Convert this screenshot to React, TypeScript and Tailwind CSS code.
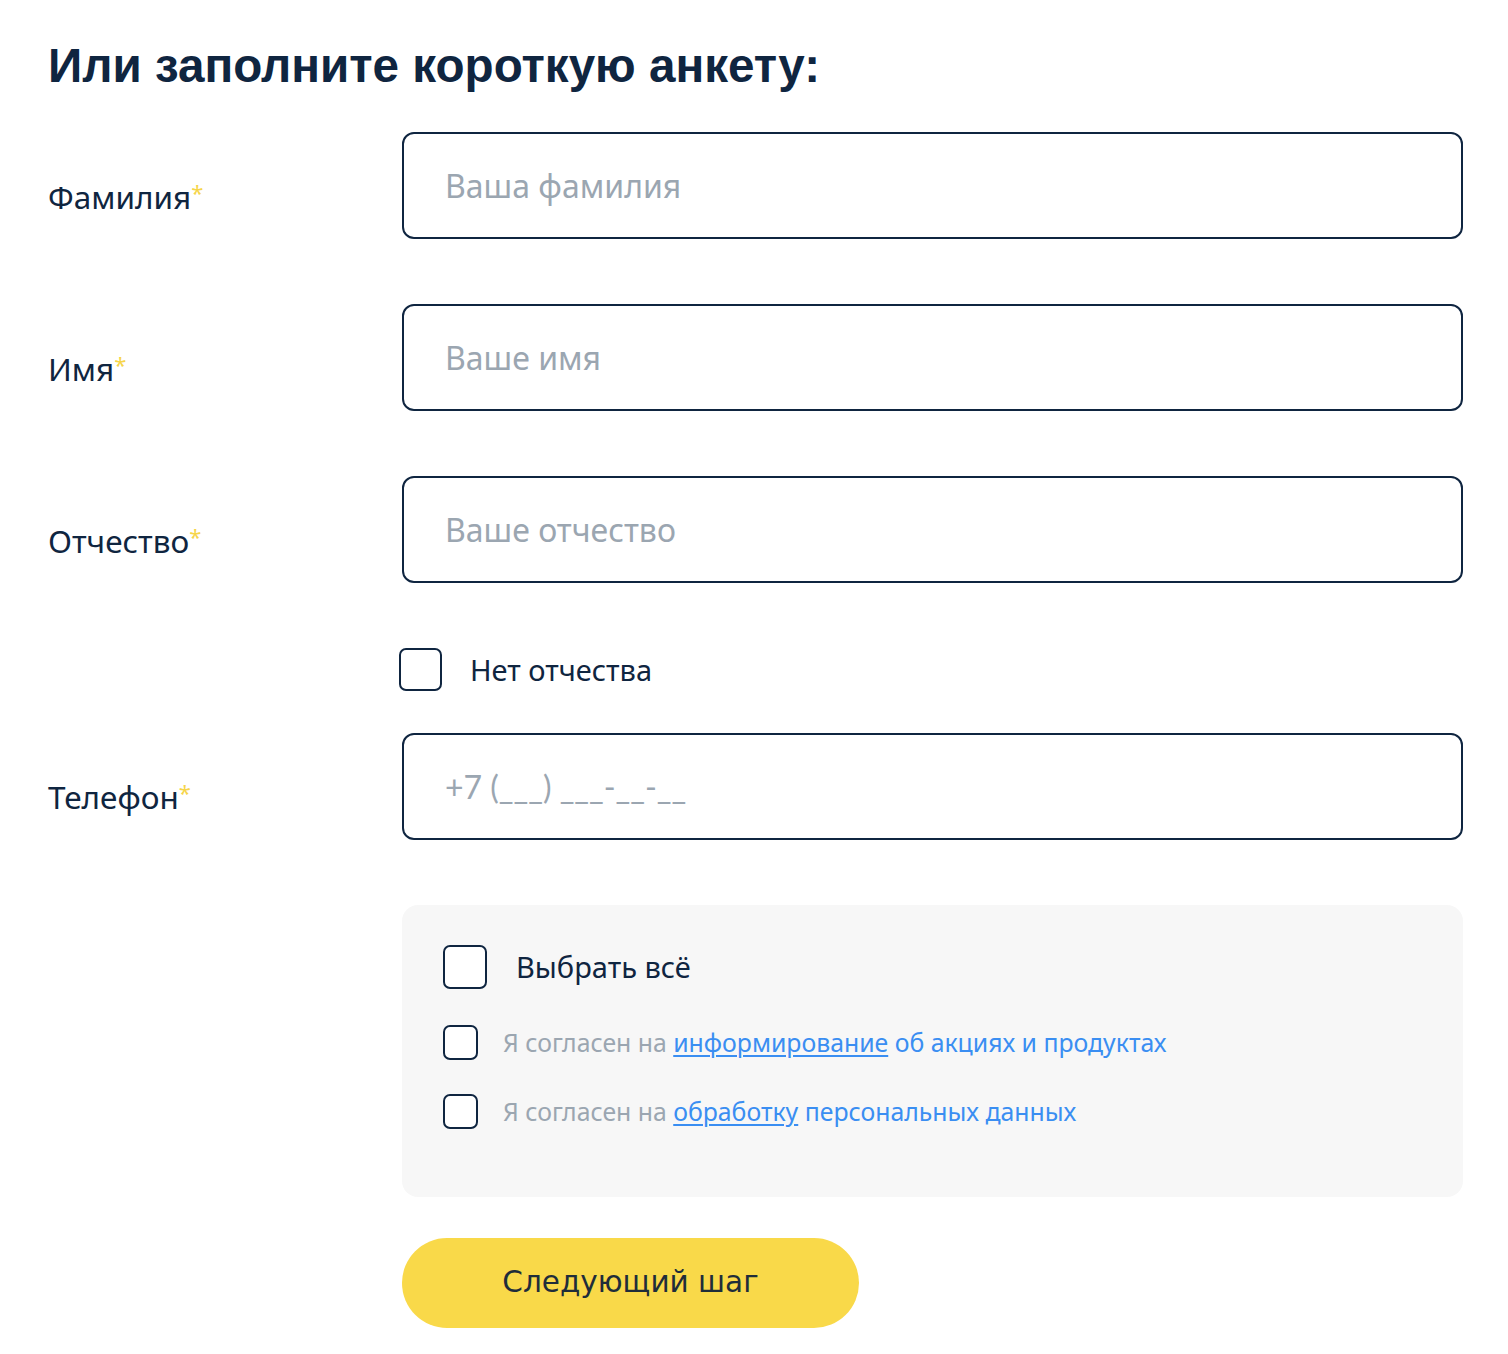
import React from 'react';

const fields = [
  { label: 'Фамилия', placeholder: 'Ваша фамилия' },
  { label: 'Имя', placeholder: 'Ваше имя' },
  { label: 'Отчество', placeholder: 'Ваше отчество' },
];

const Label: React.FC<{ text: string }> = ({ text }) => (
  <div className="w-[354px] shrink-0 pt-[22px] text-[31.5px] text-[#0f2540]">
    {text}
    <span className="relative -top-[8px] text-[22px] text-[#f6d54a]">*</span>
  </div>
);

const Box: React.FC<{ size: string }> = ({ size }) => (
  <span className={`${size} shrink-0 rounded-[7px] border-2 border-[#0f2540] bg-white`} />
);

export default function App() {
  return (
    <div className="min-h-screen bg-white pl-[48px] pr-[45px] pt-[38px] font-['Noto_Sans',sans-serif]">
      <h1 className="font-['Liberation_Sans',Arial,sans-serif] text-[47.6px] font-bold leading-[56px] text-[#0f2540]">
        Или заполните короткую анкету:
      </h1>

      <div className="mt-[38px] flex flex-col gap-[65px]">
        {fields.map((f) => (
          <div key={f.label} className="flex items-center">
            <Label text={f.label} />
            <input
              placeholder={f.placeholder}
              className="h-[107px] flex-1 rounded-[12px] border-2 border-[#0f2540] px-[41px] text-[32px] text-[#0f2540] outline-none placeholder:text-[#9ba6b1]"
            />
          </div>
        ))}
      </div>

      <label className="ml-[351px] mt-[65px] flex items-center gap-[28px]">
        <Box size="h-[43px] w-[43px]" />
        <span className="text-[29px] text-[#0f2540]">Нет отчества</span>
      </label>

      <div className="mt-[41px] flex items-center">
        <Label text="Телефон" />
        <input
          placeholder="+7 (___) ___-__-__"
          className="h-[107px] flex-1 rounded-[12px] border-2 border-[#0f2540] px-[41px] font-['Lato',sans-serif] text-[32px] text-[#0f2540] outline-none placeholder:text-[#9ba6b1]"
        />
      </div>

      <div className="ml-[354px] mt-[65px] h-[292px] rounded-[16px] bg-[#f7f7f7] px-[41px] pt-[40px]">
        <label className="flex items-center gap-[29px]">
          <Box size="h-[44px] w-[44px]" />
          <span className="text-[29px] text-[#0f2540]">Выбрать всё</span>
        </label>
        <label className="mt-[35px] flex items-center gap-[25px]">
          <Box size="h-[35px] w-[35px]" />
          <span className="text-[24.8px] text-[#9ba6b1]">
            Я согласен на{' '}
            <a className="text-[#3a8ef2] underline decoration-2 underline-offset-[3px]">информирование</a>{' '}
            <span className="text-[#3a8ef2]">об акциях и продуктах</span>
          </span>
        </label>
        <label className="mt-[32px] flex items-center gap-[25px]">
          <Box size="h-[35px] w-[35px]" />
          <span className="text-[24.8px] text-[#9ba6b1]">
            Я согласен на{' '}
            <a className="text-[#3a8ef2] underline decoration-2 underline-offset-[3px]">обработку</a>{' '}
            <span className="text-[#3a8ef2]">персональных данных</span>
          </span>
        </label>
      </div>

      <button className="ml-[354px] mt-[41px] h-[90px] w-[457px] rounded-full bg-[#f9d949] font-['DejaVu_Sans',sans-serif] text-[29.5px] text-[#1f2d3a]">
        Следующий шаг
      </button>
    </div>
  );
}
